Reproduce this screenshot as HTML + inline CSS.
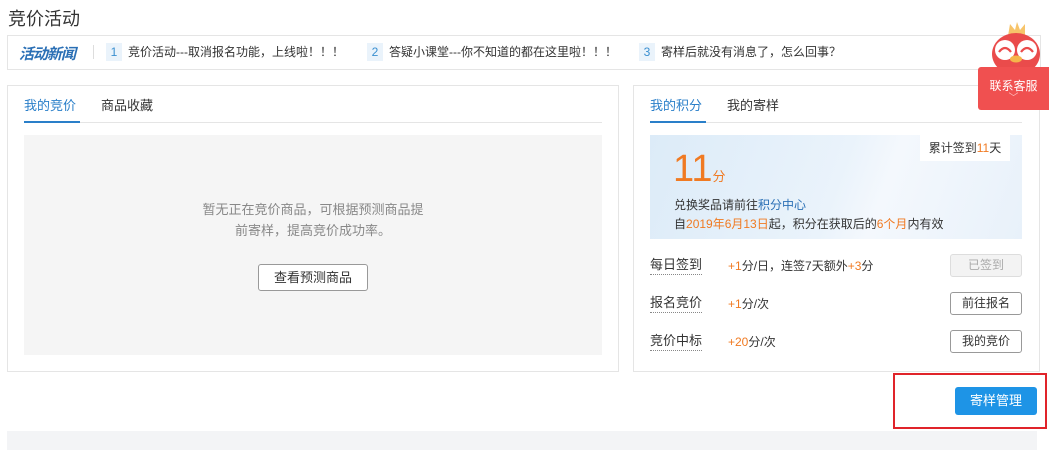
<!DOCTYPE html>
<html><head><meta charset="utf-8"><style>
*{margin:0;padding:0;box-sizing:border-box}
body{width:1049px;height:450px;background:#fff;font-family:"Liberation Sans","Noto Sans CJK SC",sans-serif;font-size:12px;color:#333;position:relative;overflow:hidden}
.a{position:absolute}
.o{color:#f07a22}
.btn{position:absolute;left:950px;width:72px;height:23px;border:1px solid #999;border-radius:3px;text-align:center;line-height:21px;font-size:12px;background:#fff;color:#333}
.lbl{position:absolute;left:650px;font-size:13px;border-bottom:1px dotted #888;line-height:18px}
.num{display:inline-block;width:16px;height:18px;background:#eaf3fb;color:#3a8fd0;text-align:center;line-height:18px;margin-right:6px}
</style></head><body>
<div class="a" style="left:8px;top:5px;font-size:18px;color:#333">竞价活动</div>
<div class="a" style="left:7px;top:35px;width:1034px;height:35px;border:1px solid #e5e5e5"></div>
<div class="a" style="left:19px;top:43px;font-size:15px;font-weight:bold;color:#2a6fb5;font-style:italic;letter-spacing:-1px">活动新闻</div>
<div class="a" style="left:93px;top:45px;width:1px;height:14px;background:#ddd"></div>
<div class="a" style="left:106px;top:43px;font-size:12px"><span class="num">1</span>竞价活动---取消报名功能，上线啦！！！</div>
<div class="a" style="left:367px;top:43px;font-size:12px"><span class="num">2</span>答疑小课堂---你不知道的都在这里啦！！！</div>
<div class="a" style="left:639px;top:43px;font-size:12px"><span class="num">3</span>寄样后就没有消息了，怎么回事？</div>

<div class="a" style="left:7px;top:85px;width:612px;height:287px;border:1px solid #e5e5e5"></div>
<div class="a" style="left:24px;top:95px;font-size:13px;color:#2a7fc9">我的竞价</div>
<div class="a" style="left:101px;top:95px;font-size:13px">商品收藏</div>
<div class="a" style="left:24px;top:122px;width:578px;height:1px;background:#e5e5e5"></div>
<div class="a" style="left:24px;top:121px;width:56px;height:2px;background:#2a7fc9"></div>
<div class="a" style="left:24px;top:135px;width:578px;height:220px;background:#f5f5f5"></div>
<div class="a" style="left:24px;top:199px;width:578px;text-align:center;color:#888;font-size:13px;line-height:21px">暂无正在竞价商品，可根据预测商品提<br>前寄样，提高竞价成功率。</div>
<div class="a" style="left:258px;top:264px;width:110px;height:27px;border:1px solid #999;border-radius:3px;background:#fff;text-align:center;line-height:25px;font-size:13px">查看预测商品</div>

<div class="a" style="left:633px;top:85px;width:407px;height:287px;border:1px solid #e5e5e5"></div>
<div class="a" style="left:650px;top:95px;font-size:13px;color:#2a7fc9">我的积分</div>
<div class="a" style="left:727px;top:95px;font-size:13px">我的寄样</div>
<div class="a" style="left:650px;top:122px;width:372px;height:1px;background:#e5e5e5"></div>
<div class="a" style="left:650px;top:121px;width:56px;height:2px;background:#2a7fc9"></div>
<div class="a" style="left:650px;top:135px;width:372px;height:104px;background:linear-gradient(110deg,#dcebf8 0%,#eaf3fb 50%,#f4f8fd 62%,#e8f1fa 100%)"></div>
<div class="a" style="left:920px;top:135px;width:90px;height:26px;background:#fff;text-align:center;line-height:26px;font-size:12px">累计签到<span class="o">11</span>天</div>
<div class="a o" style="left:673px;top:148px;font-size:38px;line-height:42px">11<span style="font-size:13px">分</span></div>
<div class="a" style="left:674px;top:196px;font-size:12px">兑换奖品请前往<span style="color:#2a6fb5">积分中心</span></div>
<div class="a" style="left:674px;top:215px;font-size:12px">自<span class="o">2019年6月13日</span>起，积分在获取后的<span class="o">6个月</span>内有效</div>

<div class="lbl" style="top:256px">每日签到</div>
<div class="a" style="left:728px;top:257px"><span class="o">+1</span>分/日，连签7天额外<span class="o">+3</span>分</div>
<div class="btn" style="top:254px;background:#f3f3f3;border-color:#ddd;color:#aaa">已签到</div>
<div class="lbl" style="top:294px">报名竞价</div>
<div class="a" style="left:728px;top:295px"><span class="o">+1</span>分/次</div>
<div class="btn" style="top:292px">前往报名</div>
<div class="lbl" style="top:332px">竞价中标</div>
<div class="a" style="left:728px;top:333px"><span class="o">+20</span>分/次</div>
<div class="btn" style="top:330px">我的竞价</div>

<div class="a" style="left:893px;top:373px;width:154px;height:56px;border:2px solid #e0242a"></div>
<div class="a" style="left:955px;top:387px;width:82px;height:28px;background:#1e94e6;border-radius:3px;color:#fff;text-align:center;line-height:28px;font-size:13px">寄样管理</div>
<div class="a" style="left:7px;top:431px;width:1030px;height:19px;background:#f3f4f6"></div>

<svg class="a" style="left:986px;top:18px" width="60" height="56" viewBox="0 0 60 56">
<path d="M22 18 L24 6 L29 12 L31 4 L34 12 L39 6 L39 18 Z" fill="#f7c46a"/>
<ellipse cx="30" cy="36" rx="24" ry="21" fill="#ea4b4b"/>
<circle cx="19" cy="32" r="10" fill="#fff"/><circle cx="41" cy="32" r="10" fill="#fff"/>
<path d="M13 34 Q19 26 25 34" stroke="#ea4b4b" stroke-width="2.2" fill="none"/>
<path d="M35 34 Q41 26 47 34" stroke="#ea4b4b" stroke-width="2.2" fill="none"/>
<ellipse cx="30" cy="41" rx="6" ry="3.5" fill="#f5b54a"/>
</svg>
<div class="a" style="left:978px;top:67px;width:71px;height:43px;background:#f05050;border-radius:3px 0 0 3px;color:#fff;text-align:center;font-size:12px;padding-top:10px">联系客服<div style="font-size:10px;line-height:10px;color:#fbb">﹀</div></div>
</body></html>
